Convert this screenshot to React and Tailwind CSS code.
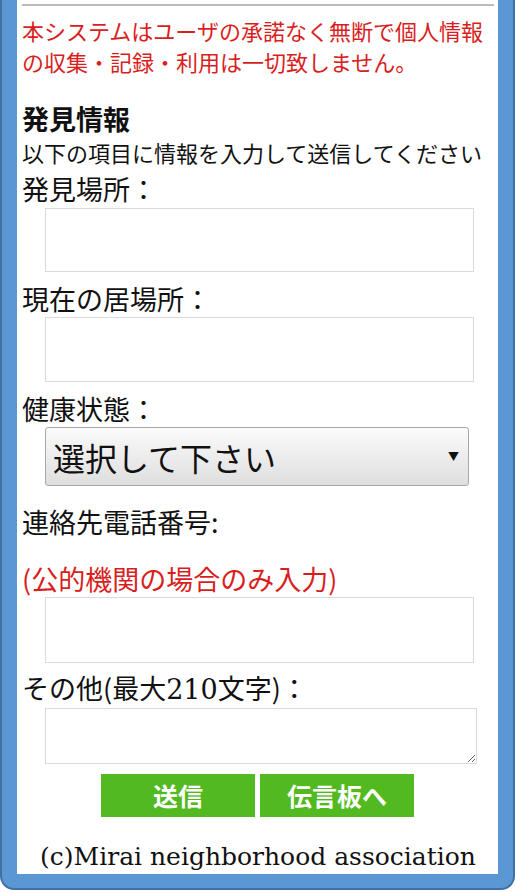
import React from "react";

const jp = { fontFamily: '"Noto Sans CJK JP", "Noto Sans", sans-serif' };

function Label({ children, className = "pt-[9px]" }) {
  return (
    <div className={"text-[27px] leading-[36px] text-[#111] " + className}>{children}</div>
  );
}

function TextInput({ h }) {
  return (
    <input
      type="text"
      className={"ml-[23px] block w-[429px] border border-[#dadada] bg-white outline-none " + h}
    />
  );
}

export default function App() {
  return (
    <div className="w-[515px] h-[893px] bg-white overflow-hidden" style={jp}>
      <div className="h-[890px] rounded-b-[14px] border-x-2 border-b-2 border-[#3f71a6] bg-[#5b97d3] px-[15px] pb-[14px]">
        <div className="h-full bg-white pl-[5px] pr-[4px] pt-[4px]">
          <div className="h-[2px] bg-[#bcbcbc]" />
          <p className="mt-[9px] text-[22px] leading-[31px] text-[#d91e1e]">
            本システムはユーザの承諾なく無断で個人情報の収集・記録・利用は一切致しません。
          </p>
          <h2 className="mt-[26px] text-[27px] font-bold leading-[32px] text-[#111]">発見情報</h2>
          <div className="text-[22px] leading-[34px] text-[#111]">以下の項目に情報を入力して送信してください</div>
          <div className="mt-[2px] text-[27px] leading-[36px] text-[#111]">発見場所：</div>
          <div className="h-[1px]" />
          <TextInput h="h-[64px]" />
          <Label>現在の居場所：</Label>
          <TextInput h="h-[65px]" />
          <Label>健康状態：</Label>
          <div className="ml-[23px] flex h-[59px] w-[424px] items-center justify-between rounded-[3px] border border-[#a8a8a8] bg-gradient-to-b from-[#fbfbfb] to-[#dedede] pl-[7px] pr-[9px]">
            <span className="text-[32px] leading-none text-[#111]">選択して下さい</span>
            <span className="text-[11px] leading-none text-[#111]">▼</span>
          </div>
          <div className="pt-[18px] text-[27px] leading-[36px] text-[#111]">連絡先電話番号:</div>
          <div className="mt-[21px] text-[27px] leading-[36px] text-[#d91e1e]">(公的機関の場合のみ入力)</div>
          <TextInput h="h-[66px]" />
          <Label className="pt-[7px]">
            その他(最大<span style={{ fontFamily: '"DejaVu Serif", serif' }}>210</span>文字)：
          </Label>
          <textarea className="ml-[23px] block h-[56px] w-[432px] resize border border-[#dadada] bg-white outline-none" />
          <div className="mt-[10px] flex justify-center gap-[5px] pr-[1px]">
            <button className="h-[43px] w-[154px] bg-[#53b920] text-[25px] font-bold leading-none text-white">送信</button>
            <button className="h-[43px] w-[154px] bg-[#53b920] text-[25px] font-bold leading-none text-white">伝言板へ</button>
          </div>
          <div
            className="mt-[25px] text-center text-[25px] leading-[30px] text-[#111]"
            style={{ fontFamily: '"DejaVu Serif", serif' }}
          >
            (c)Mirai neighborhood association
          </div>
        </div>
      </div>
    </div>
  );
}
